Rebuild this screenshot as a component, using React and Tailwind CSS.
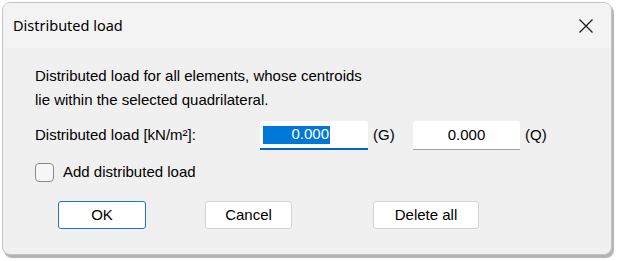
export default function App() {
  const body = { fontFamily: '"Liberation Sans", Arial, sans-serif' };

  return (
    <div className="h-[261px] w-[618px] bg-white pl-[2px] pt-[2px]">
      <div className="flex h-[253px] w-[610px] flex-col overflow-hidden rounded-[8px] border border-[#c4c4c4] bg-[#f0f0f0] shadow-[2px_3px_1px_rgba(0,0,0,0.3)]">
        <div className="flex h-[45px] items-center justify-between bg-[#f3f3f3] pl-[10px] pr-[16px]">
          <span className="text-[14.5px] text-black" style={{ fontFamily: '"Noto Sans", "Open Sans", sans-serif' }}>
            Distributed load
          </span>
          <svg width="16" height="16" viewBox="0 0 16 16" className="mr-[1px]">
            <path d="M1.5 1.5 L14.5 14.5 M14.5 1.5 L1.5 14.5" stroke="#1a1a1a" strokeWidth="1.3" fill="none" />
          </svg>
        </div>

        <div className="flex flex-col pl-[32px] pt-[16px] text-[15px] text-black" style={body}>
          <p className="leading-[24px]">Distributed load for all elements, whose centroids</p>
          <p className="leading-[24px]">lie within the selected quadrilateral.</p>

          <div className="mt-[9px] flex h-[29px] items-center">
            <span className="w-[225px]">Distributed load [kN/m²]:</span>
            <div className="flex h-[29px] w-[108px] items-center rounded-t-[3px] border-b-2 border-[#0067c0] bg-white pl-[3px]">
              <span className="flex h-[18px] w-[67px] items-center justify-end bg-[#0078d7] pr-[1px] text-white">0.000</span>
            </div>
            <span className="ml-[5px] w-[40px]">(G)</span>
            <div className="flex h-[29px] w-[107px] items-center justify-center rounded-t-[3px] border-b border-[#a0a0a0] bg-white">
              0.000
            </div>
            <span className="ml-[5px]">(Q)</span>
          </div>

          <label className="mt-[13px] flex h-[19px] items-center gap-[9px]">
            <span className="h-[19px] w-[19px] rounded-[4px] border border-[#8a8a8a] bg-[#f7f7f7]" />
            <span>Add distributed load</span>
          </label>

          <div className="mt-[19px] flex">
            <button className="ml-[23px] h-[28px] w-[88px] rounded-[3px] border border-[#1f73c9] bg-white">OK</button>
            <button className="ml-[59px] h-[28px] w-[87px] rounded-[3px] border border-[#d4d4d4] bg-white">Cancel</button>
            <button className="ml-[81px] h-[28px] w-[106px] rounded-[3px] border border-[#d4d4d4] bg-white">Delete all</button>
          </div>
        </div>
      </div>
    </div>
  );
}
